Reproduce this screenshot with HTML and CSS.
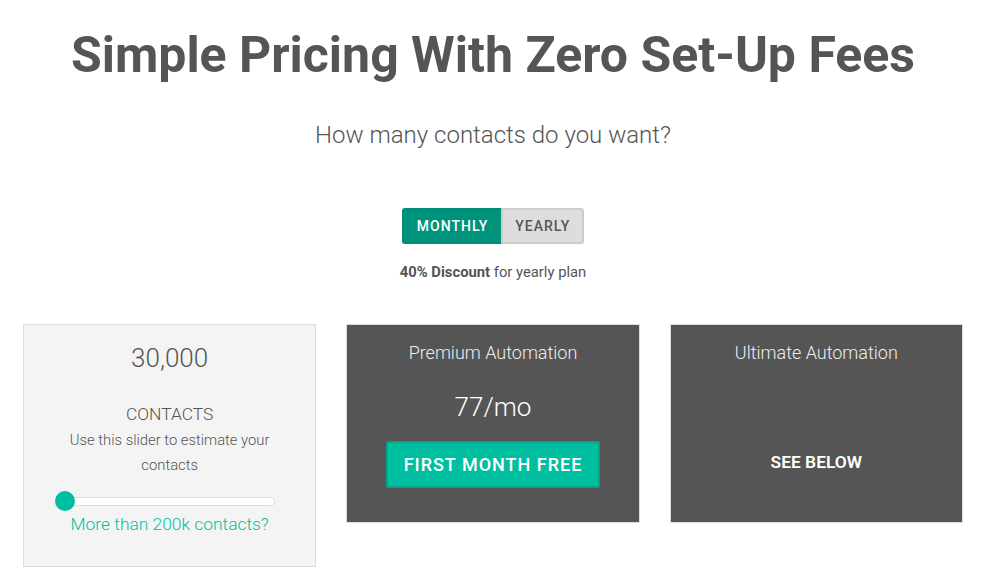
FILE: index.html
```html
<!DOCTYPE html>
<html>
<head>
<meta charset="utf-8">
<link rel="stylesheet" href="styles.css">
</head>
<body>
<div class="page">
  <div class="container">
    <h1 class="title">Simple Pricing With Zero Set-Up Fees</h1>
    <p class="subtitle">How many contacts do you want?</p>
    <div class="toggle">
      <button class="tbtn active">MONTHLY</button><button class="tbtn">YEARLY</button>
    </div>
    <p class="discount"><b>40% Discount</b> for yearly plan</p>
    <div class="cards">
      <div class="col">
        <div class="card light">
          <div class="count">30,000</div>
          <div class="label">CONTACTS</div>
          <div class="hint">Use this slider to estimate your contacts</div>
          <div class="slider"><div class="track"></div><div class="thumb"></div></div>
          <a class="more">More than 200k contacts?</a>
        </div>
      </div>
      <div class="col">
        <div class="card dark">
          <div class="plan">Premium Automation</div>
          <div class="price">77/mo</div>
          <button class="cta">FIRST MONTH FREE</button>
        </div>
      </div>
      <div class="col">
        <div class="card dark">
          <div class="plan">Ultimate Automation</div>
          <div class="see">SEE BELOW</div>
        </div>
      </div>
    </div>
  </div>
</div>
</body>
</html>
```
FILE: styles.css
```css
* { box-sizing: border-box; }
html, body { margin: 0; padding: 0; background: #fff; }
body { font-family: Roboto, "Liberation Sans", Arial, sans-serif; color: #555; }
.page { width: 986px; }
.container { width: 970px; margin: 0 auto; padding: 0 15px; text-align: center; }
.title { margin: 0; padding-top: 25px; font-size: 50px; line-height: 60px; font-weight: 700; color: #555; }
.subtitle { margin: 35px 0 0; font-size: 24px; line-height: 30px; font-weight: 300; color: #555; }
.toggle { margin-top: 58px; display: flex; justify-content: center; }
.tbtn { height: 36px; padding: 0 12px; font-family: inherit; font-size: 14px; font-weight: 500; letter-spacing: 1px; border: 2px solid #ccc; background: #ddd; color: #555; border-radius: 0 3px 3px 0; margin: 0; }
.tbtn.active { background: #00937c; border-color: #008c75; color: #fff; border-radius: 3px 0 0 3px; border-right: none; padding: 0 13px; }
.discount { margin: 18px 0 0; font-size: 14.8px; line-height: 20px; color: #555; }
.discount b { font-weight: 700; }
.cards { display: flex; margin: 42px -15px 0; align-items: flex-start; }
.col { width: 33.3333%; padding: 0 15px; }
.card { border: 1px solid #ddd; }
.card.light { background: #f4f4f4; height: 243px; padding-top: 16px; }
.card.dark { background: #555; height: 199px; color: #eee; padding-top: 16px; }
.count { font-size: 26px; font-weight: 300; line-height: 34px; color: #555; }
.label { margin-top: 28px; font-size: 17.4px; font-weight: 300; line-height: 22px; }
.hint { margin: 3px auto 0; width: 230px; font-size: 14.8px; font-weight: 300; line-height: 25px; }
.slider { position: relative; margin: 13px 0 0 31px; width: 220px; height: 20px; }
.track { position: absolute; left: 0; right: 0; top: 6px; height: 9px; background: #fff; border: 1px solid #ddd; border-radius: 5px; }
.thumb { position: absolute; left: 0; top: 0; width: 20px; height: 20px; border-radius: 50%; background: #00bfa0; }
.more { display: block; margin-top: 1px; font-size: 17.4px; font-weight: 300; color: #00bfa0; line-height: 24px; }
.plan { font-size: 18px; font-weight: 300; line-height: 24px; color: #eee; }
.price { margin-top: 25px; font-size: 26px; font-weight: 300; line-height: 34px; color: #fff; }
.cta { margin-top: 17px; width: 214px; height: 47px; background: #00bfa0; border: 2px solid #00a58a; border-radius: 2px; color: #fff; font-family: inherit; font-size: 18px; font-weight: 500; letter-spacing: 1px; }
.see { margin-top: 86px; font-size: 17.4px; font-weight: 600; color: #fff; line-height: 22px; }
```
